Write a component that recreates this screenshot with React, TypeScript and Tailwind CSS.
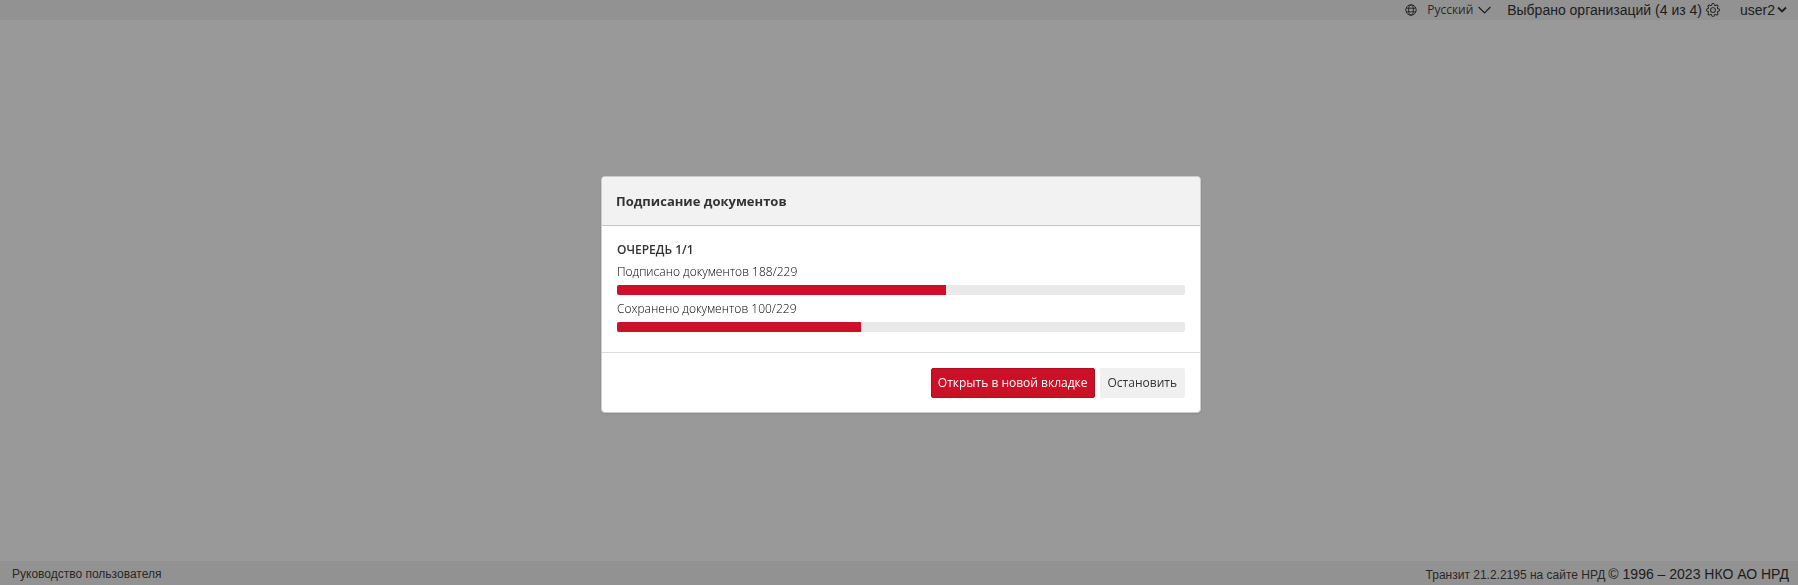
import { BsGear } from 'react-icons/bs'

interface ProgressRow {
  id: string
  label: string
  done: number
  total: number
  percent: number
}

const ROWS: ProgressRow[] = [
  { id: 'signed', label: 'Подписано документов', done: 188, total: 229, percent: 58 },
  { id: 'saved', label: 'Сохранено документов', done: 100, total: 229, percent: 43 },
]

function GlobeIcon() {
  return (
    <svg width="12" height="12" viewBox="0 0 12 12" fill="none" stroke="currentColor" strokeWidth="0.9" aria-hidden="true">
      <circle cx="6" cy="6" r="5.2" />
      <ellipse cx="6" cy="6" rx="2.4" ry="5.2" />
      <path d="M1.3 4.2h9.4M1.3 7.8h9.4" />
    </svg>
  )
}

function TopBar() {
  return (
    <header className="flex h-5 items-center justify-end bg-[#f4f4f4] pr-[11px] font-['Liberation_Sans',Arial,sans-serif] text-sm leading-5 text-[#333]">
      <div className="mr-4 flex items-center">
        <GlobeIcon />
        <div className="relative ml-1.5 flex items-center">
          <select
            aria-label="Язык"
            className="w-17 appearance-none bg-transparent pl-1 font-['Open_Sans',sans-serif] text-xs leading-5 text-[#444]"
          >
            <option>Русский</option>
          </select>
          <svg className="pointer-events-none absolute right-0" width="13" height="8" viewBox="0 0 13 8" fill="none" stroke="currentColor" strokeWidth="1.2" aria-hidden="true">
            <path d="M.6 1l5.9 5.9L12.4 1" />
          </svg>
        </div>
      </div>
      <button type="button" className="mr-5 flex items-center gap-1">
        Выбрано организаций (4 из 4)
        <BsGear size={14} />
      </button>
      <button type="button" className="flex items-center">
        user2
        <svg className="ml-0.5" width="10" height="8" viewBox="0 0 10 8" fill="none" stroke="currentColor" strokeWidth="1.9" aria-hidden="true">
          <path d="M1 1.5l4 4 4-4" />
        </svg>
      </button>
    </header>
  )
}

function Progress({ id, label, done, total, percent }: ProgressRow) {
  return (
    <div>
      <div id={id} className="pt-0.5 text-xs leading-5 font-light text-black">
        {label} {done}/{total}
      </div>
      <div
        role="progressbar"
        aria-labelledby={id}
        aria-valuenow={percent}
        aria-valuemin={0}
        aria-valuemax={100}
        className="mt-[3px] mb-0.5 h-2.5 overflow-hidden rounded-xs bg-[#e9e9e9]"
      >
        <div className="h-full bg-[#cb1027]" style={{ width: `${percent}%` }} />
      </div>
    </div>
  )
}

function SigningDialog() {
  return (
    <section
      role="dialog"
      aria-modal="true"
      aria-labelledby="dialog-title"
      className="w-full max-w-[600px] overflow-hidden rounded-sm border border-[#ccc] bg-white font-['Open_Sans',sans-serif] text-[#333] shadow-sm"
    >
      <h2 id="dialog-title" className="border-b border-[#c4c4c4] bg-[#f2f2f2] p-3.5 text-[13px] leading-5 font-bold">
        Подписание документов
      </h2>
      <div className="px-[15px] pt-3.5 pb-4.5">
        <h3 className="text-xs leading-5 font-semibold">ОЧЕРЕДЬ 1/1</h3>
        {ROWS.map((row) => (
          <Progress key={row.id} {...row} />
        ))}
      </div>
      <div className="flex justify-end gap-[5px] border-t border-[#ddd] px-[15px] pt-[15px] pb-3.5 text-xs">
        <button type="button" className="h-7.5 rounded-xs border border-[#b00f23] bg-[#cb1027] px-1.5 text-white">
          Открыть в новой вкладке
        </button>
        <button type="button" className="h-7.5 rounded-xs bg-[#f0f0f0] px-2">
          Остановить
        </button>
      </div>
    </section>
  )
}

export default function App() {
  return (
    <div className="flex min-h-screen flex-col bg-white">
      <TopBar />
      <main className="flex-1" />
      <footer className="flex h-6 items-center justify-between bg-[#f4f4f4] pr-[9px] pl-3 pt-0.5 font-['Liberation_Sans',Arial,sans-serif] text-xs text-[#444]">
        <a href="#guide">Руководство пользователя</a>
        <div className="flex items-baseline gap-[3px]">
          <a href="#transit">Транзит 21.2.2195 на сайте НРД</a>
          <span className="text-sm leading-5 text-[#333]">© 1996 – 2023 НКО АО НРД</span>
        </div>
      </footer>
      <div className="fixed inset-0 flex items-center justify-center bg-black/40 pt-1 pl-1">
        <SigningDialog />
      </div>
    </div>
  )
}
